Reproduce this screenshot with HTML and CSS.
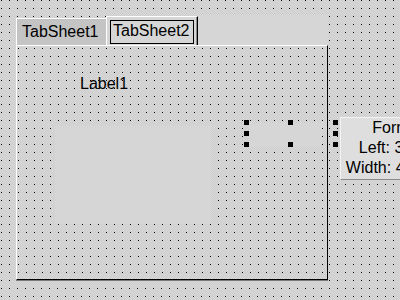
FILE: index.html
```html
<!DOCTYPE html>
<html lang="en">

<head>
    <meta charset="UTF-8">
    <title>Form1 - Designer</title>
    <link rel="stylesheet" href="styles.css">
</head>

<body>
    <div class="designer">
        <!-- PageControl1 -->
        <div class="pagecontrol">
            <div class="tabs">
                <div class="tab">TabSheet1</div>
                <div class="tab active"><span class="focus">TabSheet2</span></div>
                <div class="tabs-rest"></div>
            </div>
            <div class="page">
                <div class="comp label1">Label1</div>
                <div class="comp panel1"></div>
                <div class="comp panel2"></div>
            </div>
        </div>

        <!-- selection grabbers -->
        <div class="grab" style="left: 244px; top: 120px"></div>
        <div class="grab" style="left: 288px; top: 120px"></div>
        <div class="grab" style="left: 333px; top: 120px"></div>
        <div class="grab" style="left: 244px; top: 131px"></div>
        <div class="grab" style="left: 333px; top: 131px"></div>
        <div class="grab" style="left: 244px; top: 142px"></div>
        <div class="grab" style="left: 288px; top: 142px"></div>
        <div class="grab" style="left: 333px; top: 142px"></div>

        <!-- move hint -->
        <div class="hint">
            <div>Form1: TPanel</div>
            <div>Left: 368, Top: 120</div>
            <div>Width: 400, Height: 23</div>
        </div>
    </div>
</body>

</html>
```

FILE: styles.css
```css
html,
body {
    margin: 0;
    overflow: hidden;
}

body {
    font-family: "Liberation Sans", Arial, sans-serif;
    font-size: 16px;
    color: #000;
}

.designer {
    position: relative;
    width: 400px;
    height: 300px;
    box-sizing: border-box;
    padding: 15px 0 0 16px;
    overflow: hidden;
    background-color: #d3d3d3;
    background-image:
        url("data:image/svg+xml,%3Csvg xmlns='http://www.w3.org/2000/svg' width='8' height='8'%3E%3Crect x='7' y='7' width='1' height='1' fill='%23000'/%3E%3C/svg%3E"),
        conic-gradient(#cdcdcd 25%, #d9d9d9 0 50%, #cdcdcd 0 75%, #d9d9d9 0);
    background-size: 8px 8px, 2px 2px;
    background-position: 2px 1px, 0 0;
}

.pagecontrol {
    width: 312px;
}

.tabs {
    display: flex;
    align-items: flex-end;
    height: 30px;
}

.tab {
    box-sizing: border-box;
    width: 90px;
    height: 27px;
    padding: 4px 0 0 5px;
    line-height: 18px;
    background: #c4c4c4;
    border-top: 1px solid #fff;
    border-left: 1px solid #fff;
    white-space: nowrap;
}

.tab.active {
    width: 92px;
    height: 29px;
    padding: 3px 0 0 3px;
    background: #d6d6d6;
    border-right: 1px solid #000;
    box-shadow: inset -1px 0 0 #8a8a8a;
}

.focus {
    display: block;
    box-sizing: border-box;
    width: 84px;
    height: 24px;
    padding: 1px 0 0 2px;
    border: 1px solid #000;
}

.tabs-rest {
    flex: 1;
    height: 30px;
    background: #d6d6d6;
}

.page {
    position: relative;
    box-sizing: border-box;
    height: 235px;
    border-top: 1px solid #fff;
    border-left: 1px solid #fff;
    border-right: 1px solid #000;
    border-bottom: 1px solid #000;
    box-shadow: 0 1px 0 #7a7a7a;
    background-color: #d3d3d3;
    background-image:
        url("data:image/svg+xml,%3Csvg xmlns='http://www.w3.org/2000/svg' width='8' height='8'%3E%3Crect x='7' y='7' width='1' height='1' fill='%23000'/%3E%3C/svg%3E"),
        conic-gradient(#cdcdcd 25%, #d9d9d9 0 50%, #cdcdcd 0 75%, #d9d9d9 0);
    background-size: 8px 8px, 2px 2px;
    background-position: 2px 3px, 0 0;
}

.comp {
    position: absolute;
}

.label1 {
    left: 63px;
    top: 29px;
    line-height: 18px;
}

.panel1 {
    left: 38px;
    top: 80px;
    width: 156px;
    height: 98px;
    background: #d6d6d6;
}

.panel2 {
    left: 232px;
    top: 77px;
    width: 73px;
    height: 24px;
    background: #d6d6d6;
}

.grab {
    position: absolute;
    width: 5px;
    height: 5px;
    background: #000;
}

.hint {
    position: absolute;
    left: 340px;
    top: 117px;
    width: 170px;
    height: 63px;
    box-sizing: border-box;
    background: #dedede;
    border-top: 1px solid #f4f4f4;
    border-left: 1px solid #f4f4f4;
    border-bottom: 1px solid #8a8a8a;
    border-right: 1px solid #8a8a8a;
    text-align: center;
    line-height: 20px;
    white-space: nowrap;
}
```
